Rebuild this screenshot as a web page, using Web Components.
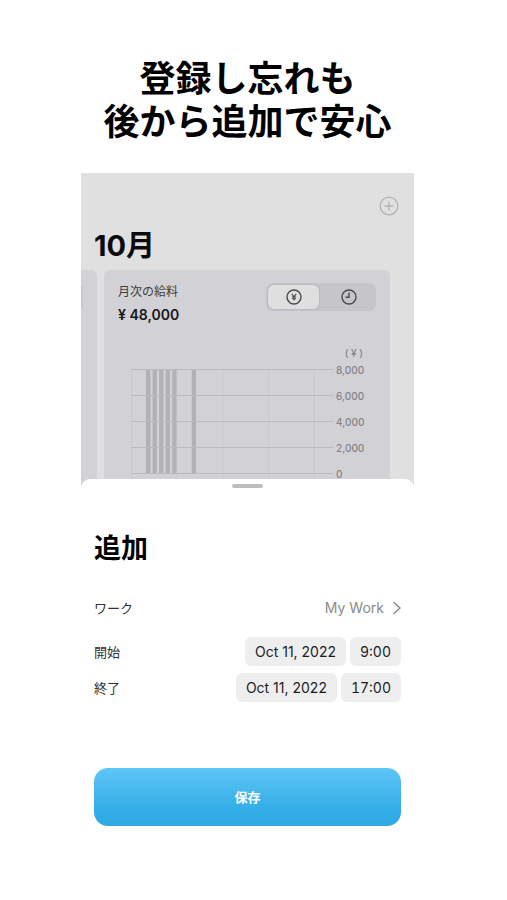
<!DOCTYPE html>
<html lang="ja">
<head>
<meta charset="utf-8">
<meta name="viewport" content="width=device-width">
<title>追加</title>
<style>
body { margin: 0; background: #fff; color: #0b0b0d; font-family: Inter, "Noto Sans CJK JP", sans-serif; }
</style>
</head>
<body>
<promo-page>
  <span slot="title">登録し忘れも<br>後から追加で安心</span>
  <month-backdrop month="10月"><salary-card></salary-card></month-backdrop>
  <entry-sheet heading="追加">
    <link-row label="ワーク" value="My Work"></link-row>
    <date-row label="開始" date="Oct 11, 2022" time="9:00"></date-row>
    <date-row label="終了" date="Oct 11, 2022" time="17:00"></date-row>
    <save-button slot="action">保存</save-button>
  </entry-sheet>
</promo-page>
<script>
function define(name, render) {
  customElements.define(name, class extends HTMLElement {
    connectedCallback() {
      if (!this.shadowRoot) this.attachShadow({ mode: 'open' }).innerHTML = render(this);
    }
  });
}

define('promo-page', () => `
<style>
:host { display: block; padding: 55px 93px 74px 81px; }
h1 { margin: 0 0 32px; font: 700 36px/43px "Noto Sans CJK JP", sans-serif; text-align: center; white-space: nowrap; color: #000; }
</style>
<h1><slot name="title"></slot></h1>
<slot></slot>`);

define('month-backdrop', el => `
<style>
:host { display: block; background: #e0e0e0; overflow: hidden; }
header { display: flex; justify-content: flex-end; padding: 23px 15px 0; }
button { display: block; padding: 0; border: 0; background: none; color: #b3b3b5; }
svg { display: block; }
h2 { margin: 12px 13px 6px; font-size: 29px; line-height: 36px; font-weight: 700; }
.cards { display: grid; grid-template-columns: 16px 1fr; gap: 7px; padding-right: 24px; }
.previous { background: #d2d1d6; border-radius: 0 6px 0 0; padding-top: 16px; }
.previous i { display: block; width: 2px; height: 22px; background: #c7c6cb; }
</style>
<header><button type="button" aria-label="追加">
<svg width="20" height="20" viewBox="0 0 20 20" fill="none" stroke="currentColor" stroke-width="1.3" stroke-linecap="round"><circle cx="10" cy="10" r="8.8"/><path d="M10 6v8M6 10h8"/></svg>
</button></header>
<h2>${el.getAttribute('month')}</h2>
<div class="cards"><div class="previous"><i></i></div><slot></slot></div>`);

define('salary-card', () => `
<style>
:host { display: block; background: #d2d1d6; border-radius: 6px 6px 0 0; padding: 13px 14px 0; }
.top { display: flex; justify-content: space-between; }
h3 { margin: 0; font-size: 12px; line-height: 18px; font-weight: 400; color: #3c3c40; }
p { margin: 4px 0 0; font-size: 14px; line-height: 20px; font-weight: 600; color: #161618; }
</style>
<div class="top"><div><h3>月次の給料</h3><p>¥ 48,000</p></div><unit-switch></unit-switch></div>
<salary-chart></salary-chart>`);

define('unit-switch', () => `
<style>
:host { display: block; }
fieldset { display: flex; gap: 4px; margin: 0; padding: 2px; border: 0; border-radius: 7px; background: #c6c5ca; width: 106px; height: 24px; }
label { flex: 1; display: grid; place-items: center; border-radius: 6px; color: #4a4a4e; }
label:has(:checked) { background: #dfdfe0; box-shadow: 0 0 2px #0003; }
input { grid-area: 1/1; appearance: none; margin: 0; width: 16px; height: 16px; }
svg { grid-area: 1/1; }
</style>
<fieldset aria-label="単位">
<label><input type="radio" name="unit" aria-label="金額" checked><svg width="16" height="16" viewBox="0 0 16 16" fill="none" stroke="currentColor" stroke-width="1.4"><circle cx="8" cy="8" r="7"/><path d="M5.800 4.800 8 7.800l2.200-3M8 7.800V11.500M5.900 8h4.200M5.900 9.700h4.200" stroke-width="1.1"/></svg></label>
<label><input type="radio" name="unit" aria-label="時間"><svg width="16" height="16" viewBox="0 0 16 16" fill="none" stroke="currentColor" stroke-width="1.4"><circle cx="8" cy="8" r="7"/><path d="M8 3.500V8.200H4.500"/></svg></label>
</fieldset>`);

define('salary-chart', () => {
  const x = day => 0.5 + day * 6.53;
  const bars = [2, 3, 4, 5, 6, 9].map(d => `<rect x="${x(d) + 1.5}" y="0.500" width="4.300" height="104"/>`).join('');
  const weeks = [0, 7, 14, 21, 28].map(d => `<path d="M${x(d)} 0V111"/>`).join('');
  const lines = [0, 26, 52, 78, 104].map(y => `<path d="M0 ${y + 0.5}H202"/>`).join('');
  return `
<style>
:host { display: block; margin-top: 21px; padding-left: 13px; color: #858489; font-size: 10px; line-height: 14px; font-weight: 500; }
.unit { margin-right: 13px; text-align: right; }
.plot { display: flex; gap: 3px; height: 123px; margin-top: 3px; }
svg { flex: 1; min-width: 0; height: 114px; margin-top: 6px; }
ol { list-style: none; margin: 0; padding: 0; width: 40px; display: grid; grid-auto-rows: 26px; }
</style>
<div class="unit">( ¥ )</div>
<div class="plot">
<svg viewBox="0 0 202 114" preserveAspectRatio="none" aria-hidden="true">
<g stroke="#c9c8cd">${weeks}</g><g fill="#b2b1b5">${bars}</g><g stroke="#bab9be">${lines}</g></svg>
<ol><li>8,000</li><li>6,000</li><li>4,000</li><li>2,000</li><li>0</li></ol>
</div>`;
});

define('entry-sheet', el => `
<style>
:host { display: block; position: relative; margin-top: -7px; padding: 5px 13px 0; border-radius: 9px 9px 0 0; background: #fff; }
.grip { width: 31px; height: 4px; margin: 0 auto; border-radius: 2px; background: #bdbdbf; }
h2 { margin: 40px 0 27px; font: 700 27px/38px "Noto Sans CJK JP", sans-serif; color: #000; }
.rows { display: grid; gap: 7px; }
.action { margin-top: 66px; }
</style>
<div class="grip"></div>
<h2>${el.getAttribute('heading')}</h2>
<div class="rows"><slot></slot></div>
<div class="action"><slot name="action"></slot></div>`);

define('link-row', el => `
<style>
:host { display: block; margin-bottom: 8px; font-size: 13px; }
a { display: flex; align-items: center; gap: 9px; height: 29px; color: #303033; text-decoration: none; }
.value { margin-left: auto; font-size: 14px; color: #8a8a8c; }
</style>
<a href="#work"><span>${el.getAttribute('label')}</span><span class="value">${el.getAttribute('value')}</span>
<svg width="8" height="14" viewBox="0 0 8 14" fill="none" stroke="#8a8a8c" stroke-width="1.5" stroke-linecap="round" stroke-linejoin="round"><path d="m1 1.500 6 5.500-6 5.500"/></svg></a>`);

define('date-row', el => `
<style>
:host { display: flex; align-items: center; gap: 4px; font-size: 13px; color: #303033; }
.label { flex: 1; }
button { height: 29px; padding: 0 10px; border: 0; border-radius: 6px; background: #eeeeef; color: #1c1c1e; font: 400 14px/20px Inter, sans-serif; }
.time { font-variant-numeric: tabular-nums; }
</style>
<span class="label" id="l">${el.getAttribute('label')}</span>
<button type="button" aria-describedby="l">${el.getAttribute('date')}</button>
<button type="button" class="time" aria-describedby="l">${el.getAttribute('time')}</button>`);

define('save-button', () => `
<style>
:host { display: block; }
button { display: block; width: 100%; height: 58px; border: 0; border-radius: 14px; color: #fff; background: linear-gradient(#5ec5f7, #33ade6 72%, #2fa9e4); font: 700 13px/20px "Noto Sans CJK JP", sans-serif; }
</style>
<button type="button"><slot></slot></button>`);
</script>
</body>
</html>
